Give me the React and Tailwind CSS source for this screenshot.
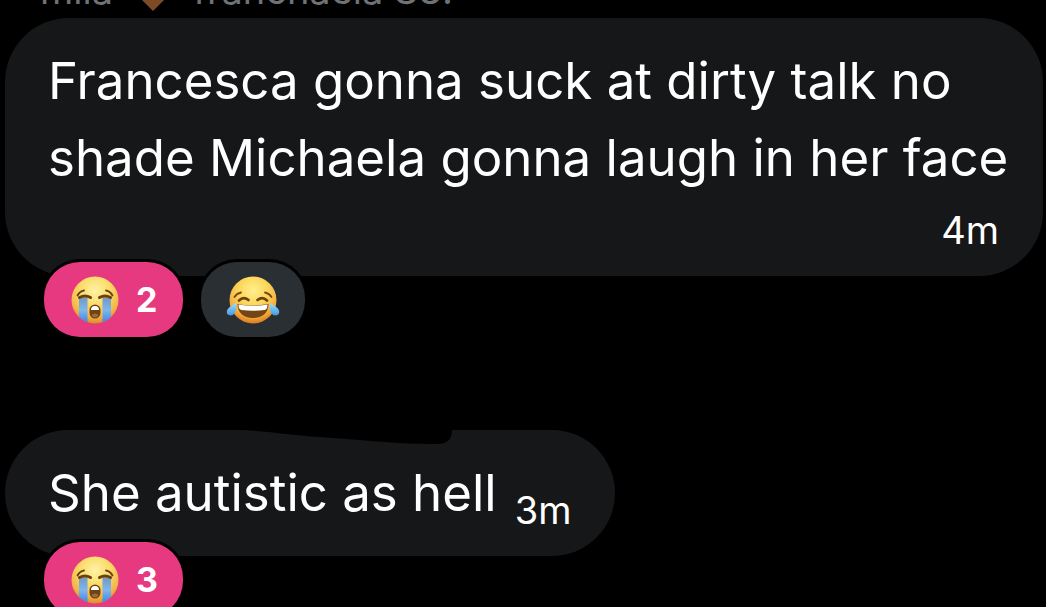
// Chat thread: message bubbles with reaction pills hanging off the bottom edge.

function CryingFace() {
  return (
    <svg viewBox="0 0 48 48" className="size-12 shrink-0" role="img" aria-label="Loudly crying face">
      <defs>
        <radialGradient id="cryFace" cx="50%" cy="30%" r="70%">
          <stop offset="0" stopColor="#fff3a6" />
          <stop offset="0.45" stopColor="#fbdb6a" />
          <stop offset="0.8" stopColor="#f2b548" />
          <stop offset="1" stopColor="#dd8a2a" />
        </radialGradient>
        <linearGradient id="cryTear" x1="0" y1="0" x2="0" y2="1">
          <stop offset="0" stopColor="#7299c4" />
          <stop offset="0.5" stopColor="#7fb6ee" />
          <stop offset="1" stopColor="#3f85e0" />
        </linearGradient>
      </defs>
      <circle cx="24" cy="24" r="23.5" fill="url(#cryFace)" />
      <path d="M8 21.5H16.5V46.5Q12 45 8 41Z" fill="url(#cryTear)" />
      <path d="M31.5 21.5H40V41Q36 45 31.5 46.5Z" fill="url(#cryTear)" />
      <path d="M6.5 19.5Q8.5 15.5 13 14.5M41.5 19.5Q39.5 15.5 35 14.5" fill="none" stroke="#6b420f" strokeWidth="1.8" strokeLinecap="round" />
      <path d="M8.5 21.5Q14 18.5 19.5 21.5M39.5 21.5Q34 18.5 28.5 21.5" fill="none" stroke="#6b420f" strokeWidth="3" strokeLinecap="round" />
      <rect x="18.5" y="28.5" width="11" height="14" rx="5.5" fill="#6f4314" />
      <path d="M20 34Q20 30 24 30Q28 30 28 34Z" fill="#fff" />
      <path d="M20.5 39Q24 36 27.5 39Q26.5 41.5 24 41.5Q21.5 41.5 20.5 39Z" fill="#9a6a38" />
    </svg>
  );
}

function JoyFace() {
  return (
    <svg viewBox="0 0 54 48" className="h-12 w-[54px] shrink-0" role="img" aria-label="Face with tears of joy">
      <defs>
        <radialGradient id="joyFace" cx="50%" cy="30%" r="70%">
          <stop offset="0" stopColor="#fff08e" />
          <stop offset="0.45" stopColor="#fbd65a" />
          <stop offset="0.8" stopColor="#f2ac3e" />
          <stop offset="1" stopColor="#dc7c22" />
        </radialGradient>
        <linearGradient id="joyTear" x1="0" y1="0" x2="0" y2="1">
          <stop offset="0" stopColor="#a5dcf8" />
          <stop offset="1" stopColor="#3f9ce4" />
        </linearGradient>
      </defs>
      <circle cx="27" cy="24" r="23.5" fill="url(#joyFace)" />
      <path d="M8.5 21Q10.5 17.5 15 16.5M45.5 21Q43.5 17.5 39 16.5" fill="none" stroke="#7a4a14" strokeWidth="1.8" strokeLinecap="round" />
      <path d="M13 24.5Q17.5 20 22.5 24M41 24.5Q36.5 20 31.5 24" fill="none" stroke="#6b420f" strokeWidth="2.6" strokeLinecap="round" />
      <path d="M11.5 28Q27 31 42.5 28Q42 41.5 27 42Q12 41.5 11.5 28Z" fill="#754414" />
      <path d="M12.5 28.5Q27 31 41.5 28.5Q41.5 33.5 38.5 34Q27 35.5 15.5 34Q12.5 33.5 12.5 28.5Z" fill="#fff" />
      <path d="M10.5 27Q11 39 4.5 39.5Q0 39 1 34.5Q2.5 30.5 10.5 27Z" fill="url(#joyTear)" />
      <path d="M43.5 27Q43 39 49.5 39.5Q54 39 53 34.5Q51.5 30.5 43.5 27Z" fill="url(#joyTear)" />
    </svg>
  );
}

function BrownHeart() {
  return (
    <svg viewBox="0 0 40 36" className="h-9 w-10" role="img" aria-label="Brown heart">
      <path d="M20 36L4 20Q-2 12 3 5Q11-3 20 6Q29-3 37 5Q42 12 36 20Z" fill="#7d4a25" />
    </svg>
  );
}

function Reaction({ children, count, mine }) {
  const color = mine ? "bg-[#e6397f]" : "bg-[#2a2f33]";
  return (
    <button className={`flex h-[75px] items-center rounded-[36px] ring-3 ring-black ${color} ${count ? "gap-[17px] px-[27px]" : "px-[25px]"}`}>
      {children}
      {count && <span className="w-5 text-center text-[34px] leading-10 font-bold">{count}</span>}
    </button>
  );
}

export default function App() {
  return (
    <main className="h-screen overflow-hidden bg-black font-['Inter',sans-serif] text-white">
      <header className="flex h-4 items-end gap-5 overflow-hidden pl-10 text-[38px] leading-12 text-[#6f7276]">
        <span className="pb-0.5">mila</span>
        <span className="pb-[5px]"><BrownHeart /></span>
        <span className="pb-0.5">franchaela S3!</span>
      </header>

      <section className="mt-0.5 pr-[3px] pl-[5px]">
        <div className="rounded-[64px] bg-[#161719] pt-6 pr-11 pb-[22px] pl-[43px]">
          <p className="-mr-3 text-[51px] leading-[77px]">
            Francesca gonna suck at dirty talk no shade Michaela gonna laugh in her face
          </p>
          <p className="pt-2.5 text-right text-[38px] leading-12">4m</p>
        </div>
        <div className="relative -mt-3.5 flex gap-[18px] pl-[39px]">
          <Reaction count={2} mine><CryingFace /></Reaction>
          <Reaction><JoyFace /></Reaction>
        </div>
      </section>

      <section className="mt-[93px] pl-[5px]">
        <div className="relative flex w-fit gap-[18px] rounded-[64px] bg-[#161719] pt-6 pr-11 pb-[22px] pl-[43px]">
          <p className="text-[51px] leading-[77px]">She autistic as hell</p>
          <p className="pt-8 text-[38px] leading-12">3m</p>
          {/* marker stroke over the top edge */}
          <svg viewBox="0 0 210 16" className="absolute top-0 left-60 h-4 w-[210px]" aria-hidden="true">
            <path d="M0 0C30 2 45 5 75 7C110 9 145 14 190 14Q207 15 207 0Z" fill="#000" />
          </svg>
        </div>
        <div className="relative -mt-3.5 flex gap-[18px] pl-[39px]">
          <Reaction count={3} mine><CryingFace /></Reaction>
        </div>
      </section>
    </main>
  );
}
